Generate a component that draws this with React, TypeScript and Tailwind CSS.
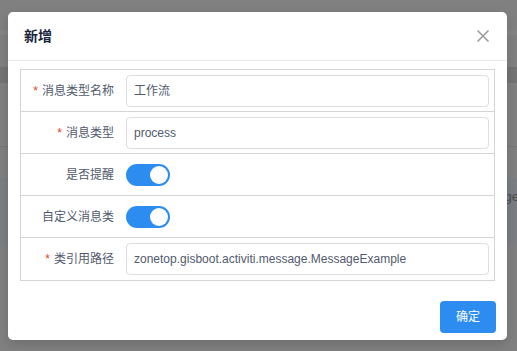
import { useState } from 'react';

const cjk = "font-['Liberation_Sans','Noto_Sans_CJK_SC',sans-serif]";

function Switch({ on }: { on: boolean }) {
  return (
    <span
      className={`relative inline-block w-[44px] h-[22px] rounded-full ${on ? 'bg-[#2d8cf0]' : 'bg-[#ccc]'}`}
    >
      <span
        className={`absolute top-[2px] w-[18px] h-[18px] rounded-full bg-white ${on ? 'left-[24px]' : 'left-[2px]'}`}
      />
    </span>
  );
}

function Row({ label, required, last, children }: { label: string; required?: boolean; last?: boolean; children: React.ReactNode }) {
  return (
    <div className={`flex h-[42px] ${last ? '' : 'border-b border-[#d4d4d4]'}`}>
      <div className="w-[99px] flex items-center justify-end pr-[6px] text-[12px] text-[#515a6e]">
        {required && <span className="text-[#ed4014] mr-[4px] text-[12px]">*</span>}
        {label}
      </div>
      <div className="flex-1 flex items-center pl-[6px] pr-[5px]">{children}</div>
    </div>
  );
}

function Input({ value }: { value: string }) {
  return (
    <div className="w-full h-[32px] flex items-center px-[7px] border border-[#dcdee2] rounded-[4px] text-[12px] text-[#515a6e] bg-white">
      {value}
    </div>
  );
}

export default function App() {
  const [remind] = useState(true);
  const [custom] = useState(true);

  return (
    <div className={`relative w-[517px] h-[351px] overflow-hidden bg-[#808080] ${cjk}`}>
      {/* page behind the mask */}
      <div className="flex flex-col">
        <div className="h-[30px]" />
        <div className="h-[5px] bg-[#858585]" />
        <div className="h-[32px]" />
        <div className="h-[16px] bg-[#747474]" />
        <div className="h-[63px]" />
        <div className="h-[1px] bg-[#777]" />
        <div className="h-[31px]" />
        <div className="h-[67px] bg-[#7b7f83] flex items-center justify-end">
          <span className="text-[13px] text-[#4a4f55] -mr-[2px] -mt-[29px]">ge</span>
        </div>
      </div>

      {/* modal */}
      <div className="absolute left-[8px] top-[12px] w-[499px] h-[328px] bg-white rounded-[5px] flex flex-col shadow-[0_4px_12px_rgba(0,0,0,0.15)]">
        <div className="h-[49px] flex items-center justify-between pl-[16px] pr-[16px] border-b border-[#e8eaec]">
          <span className="text-[14px] font-bold text-[#17233d]">新增</span>
          <svg width="14" height="14" viewBox="0 0 14 14" className="mr-[1px]">
            <path d="M1.5 1.5 L12.5 12.5 M12.5 1.5 L1.5 12.5" stroke="#999" strokeWidth="1.5" />
          </svg>
        </div>

        <div className="px-[12px] pt-[8px]">
          <div className="border border-[#d4d4d4]">
            <Row label="消息类型名称" required>
              <Input value="工作流" />
            </Row>
            <Row label="消息类型" required>
              <Input value="process" />
            </Row>
            <Row label="是否提醒">
              <Switch on={remind} />
            </Row>
            <Row label="自定义消息类">
              <Switch on={custom} />
            </Row>
            <Row label="类引用路径" required last>
              <Input value="zonetop.gisboot.activiti.message.MessageExample" />
            </Row>
          </div>
        </div>

        <div className="flex justify-end px-[11px] pt-[20px]">
          <button className="w-[56px] h-[32px] rounded-[4px] bg-[#2d8cf0] text-white text-[12px]">确定</button>
        </div>
      </div>
    </div>
  );
}
